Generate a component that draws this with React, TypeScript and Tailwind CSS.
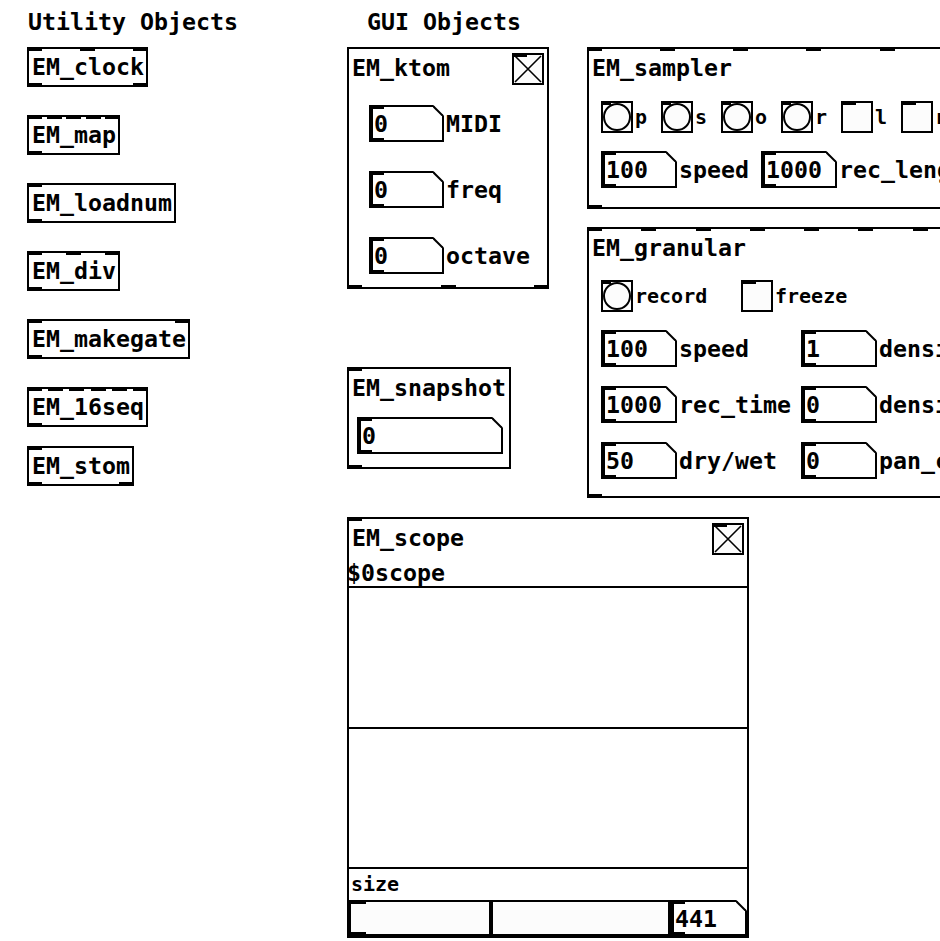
import React from 'react'

// Pd patch canvas: boxes sit at their patch coordinates, contents flow inside them
const mono = "font-['DejaVu_Sans_Mono',monospace] font-bold"

function Ports({ n, bottom }: { n: number; bottom?: boolean }) {
  return (
    <div
      className={`absolute -left-[2px] -right-[2px] h-[4px] flex justify-between ${
        bottom ? '-bottom-[2px]' : '-top-[2px]'
      }`}
    >
      {Array.from({ length: n }, (_, i) => (
        <span key={i} className="w-[15px] h-full bg-black" />
      ))}
    </div>
  )
}

function ObjBox({
  label,
  ins = 1,
  outs = 1,
  className,
}: {
  label: string
  ins?: number
  outs?: number
  className: string
}) {
  return (
    <div className={`absolute h-[40px] border-2 border-black bg-white flex items-center pl-[3px] ${className}`}>
      <Ports n={ins} />
      <Ports n={outs} bottom />
      <span className="text-[23.25px] leading-[27px] -mt-[1px]">{label}</span>
    </div>
  )
}

function Bang() {
  return (
    <div className="relative shrink-0 w-[32px] h-[32px] border-2 border-black bg-[#fcfcfc] flex items-center justify-center">
      <span className="absolute -left-[2px] -top-[2px] w-[10px] h-[4px] bg-black" />
      <span className="w-[28px] h-[28px] rounded-full border-2 border-black" />
    </div>
  )
}

function Toggle({ on }: { on?: boolean }) {
  return (
    <div className="relative shrink-0 w-[32px] h-[32px] border-2 border-black bg-[#fcfcfc]">
      <span className="absolute -left-[2px] -top-[2px] w-[15px] h-[4px] bg-black" />
      {on && (
        <svg className="absolute inset-0" width="28" height="28" viewBox="0 0 28 28">
          <path d="M1 1L27 27M27 1L1 27" stroke="black" strokeWidth="1.6" />
        </svg>
      )}
    </div>
  )
}

function NumBox({ value, className = 'w-[76px] h-[37px]' }: { value: string; className?: string }) {
  return (
    <div className={`relative shrink-0 border-2 border-l-4 border-black bg-white flex items-center ${className}`}>
      <span className="absolute -left-[4px] -top-[2px] w-[15px] h-[4px] bg-black" />
      <span className="absolute -left-[4px] -bottom-[2px] w-[15px] h-[4px] bg-black" />
      <svg className="absolute -top-[2px] -right-[2px]" width="11" height="11" viewBox="0 0 11 11">
        <polygon points="0,0 11,0 11,11" fill="white" />
        <path d="M0 1L10 11" stroke="black" strokeWidth="2" />
      </svg>
      <span className="pl-[1px] text-[23.25px] leading-[27px]">{value}</span>
    </div>
  )
}

function Label({ text, small }: { text: string; small?: boolean }) {
  return (
    <span
      className={`ml-[2px] whitespace-nowrap ${
        small ? 'text-[20px] leading-[24px]' : 'text-[23.25px] leading-[27px]'
      }`}
    >
      {text}
    </span>
  )
}

function KtomRow({ label, className }: { label: string; className?: string }) {
  return (
    <div className={`flex items-center h-[37px] ${className ?? ''}`}>
      <NumBox value="0" className="w-[75px] h-[37px]" />
      <Label text={label} />
    </div>
  )
}

export default function App() {
  return (
    <div className={`relative w-[940px] h-[941px] overflow-hidden bg-white text-black ${mono}`}>
      <div className="absolute left-[28px] top-[8px] text-[23.25px] leading-[27px]">Utility Objects</div>
      <div className="absolute left-[367px] top-[8px] text-[23.25px] leading-[27px]">GUI Objects</div>

      <ObjBox label="EM_clock" ins={3} outs={2} className="left-[27px] top-[47px] w-[121px]" />
      <ObjBox label="EM_map" ins={5} className="left-[27px] top-[115px] w-[93px]" />
      <ObjBox label="EM_loadnum" className="left-[27px] top-[183px] w-[149px]" />
      <ObjBox label="EM_div" ins={3} className="left-[27px] top-[251px] w-[93px]" />
      <ObjBox label="EM_makegate" ins={2} className="left-[27px] top-[319px] w-[163px]" />
      <ObjBox label="EM_16seq" ins={6} className="left-[27px] top-[387px] w-[121px]" />
      <ObjBox label="EM_stom" outs={2} className="left-[27px] top-[446px] w-[107px]" />

      {/* EM_ktom */}
      <div className="absolute left-[347px] top-[47px] w-[202px] h-[242px] border-2 border-black flex flex-col">
        <Ports n={3} bottom />
        <div className="flex justify-between items-start pt-[4px] pr-[3px] pl-[3px]">
          <span className="mt-[1px] text-[23.25px] leading-[27px]">EM_ktom</span>
          <Toggle on />
        </div>
        <div className="flex flex-col pl-[20px] pt-[20px]">
          <KtomRow label="MIDI" />
          <KtomRow label="freq" className="mt-[29px]" />
          <KtomRow label="octave" className="mt-[29px]" />
        </div>
      </div>

      {/* EM_snapshot */}
      <div className="absolute left-[347px] top-[367px] w-[164px] h-[102px] border-2 border-black">
        <Ports n={1} />
        <Ports n={1} bottom />
        <div className="pt-[5px] pl-[3px] text-[23.25px] leading-[27px]">EM_snapshot</div>
        <div className="ml-[8px] mt-[16px]">
          <NumBox value="0" className="w-[146px] h-[37px]" />
        </div>
      </div>

      {/* EM_sampler */}
      <div className="absolute left-[587px] top-[47px] w-[454px] h-[162px] border-2 border-black">
        <Ports n={7} />
        <Ports n={1} bottom />
        <div className="pt-[5px] pl-[3px] text-[23.25px] leading-[27px]">EM_sampler</div>
        <div className="flex mt-[20px] pl-[12px]">
          {['p', 's', 'o', 'r'].map((l) => (
            <div key={l} className="flex items-center w-[60px] shrink-0">
              <Bang />
              <Label text={l} small />
            </div>
          ))}
          {['l', 'r'].map((l, i) => (
            <div key={i} className="flex items-center w-[60px] shrink-0">
              <Toggle />
              <Label text={l} small />
            </div>
          ))}
        </div>
        <div className="flex mt-[18px] pl-[12px]">
          <div className="flex items-center w-[160px] shrink-0">
            <NumBox value="100" />
            <Label text="speed" />
          </div>
          <div className="flex items-center w-[160px] shrink-0">
            <NumBox value="1000" />
            <Label text="rec_length" />
          </div>
        </div>
      </div>

      {/* EM_granular */}
      <div className="absolute left-[587px] top-[227px] w-[449px] h-[271px] border-2 border-black">
        <Ports n={9} />
        <Ports n={1} bottom />
        <div className="pt-[5px] pl-[3px] text-[23.25px] leading-[27px]">EM_granular</div>
        <div className="flex mt-[19px] pl-[12px]">
          <div className="flex items-center w-[140px] shrink-0">
            <Bang />
            <Label text="record" small />
          </div>
          <div className="flex items-center w-[140px] shrink-0">
            <Toggle />
            <Label text="freeze" small />
          </div>
        </div>
        <div className="flex flex-col gap-[19px] mt-[18px] pl-[12px]">
          {[
            ['100', 'speed', '1', 'density'],
            ['1000', 'rec_time', '0', 'density_rand'],
            ['50', 'dry/wet', '0', 'pan_chaos'],
          ].map(([a, la, b, lb]) => (
            <div key={la} className="flex">
              <div className="flex items-center w-[200px] shrink-0">
                <NumBox value={a} />
                <Label text={la} />
              </div>
              <div className="flex items-center w-[200px] shrink-0">
                <NumBox value={b} />
                <Label text={lb} />
              </div>
            </div>
          ))}
        </div>
      </div>

      {/* EM_scope */}
      <div className="absolute left-[347px] top-[517px] w-[402px] h-[421px] border-2 border-black flex flex-col">
        <Ports n={1} />
        <div className="h-[67px] shrink-0">
          <div className="flex justify-between items-start pt-[4px] pr-[3px] pl-[3px]">
            <span className="mt-[1px] text-[23.25px] leading-[27px]">EM_scope</span>
            <Toggle on />
          </div>
          <div className="-ml-[2px] mt-[4px] text-[23.25px] leading-[27px]">$0scope</div>
        </div>
        <div className="h-[2px] bg-black shrink-0" />
        <div className="h-[139px] shrink-0" />
        <div className="h-[2px] bg-black shrink-0" />
        <div className="h-[138px] shrink-0" />
        <div className="h-[2px] bg-black shrink-0" />
        <div className="h-[31px] shrink-0 pt-[3px] pl-[2px] text-[20px] leading-[24px]">size</div>
        <div className="h-[36px] shrink-0 flex">
          <div className="relative w-[321px] h-full border-2 border-black bg-[#fcfcfc]">
            <span className="absolute -left-[2px] -top-[2px] w-[17px] h-[4px] bg-black" />
            <span className="absolute -left-[2px] -bottom-[2px] w-[17px] h-[4px] bg-black" />
            <span className="absolute top-0 bottom-0 left-[138px] w-[4px] bg-black" />
          </div>
          <NumBox value="441" className="flex-1 h-full" />
        </div>
      </div>
    </div>
  )
}
